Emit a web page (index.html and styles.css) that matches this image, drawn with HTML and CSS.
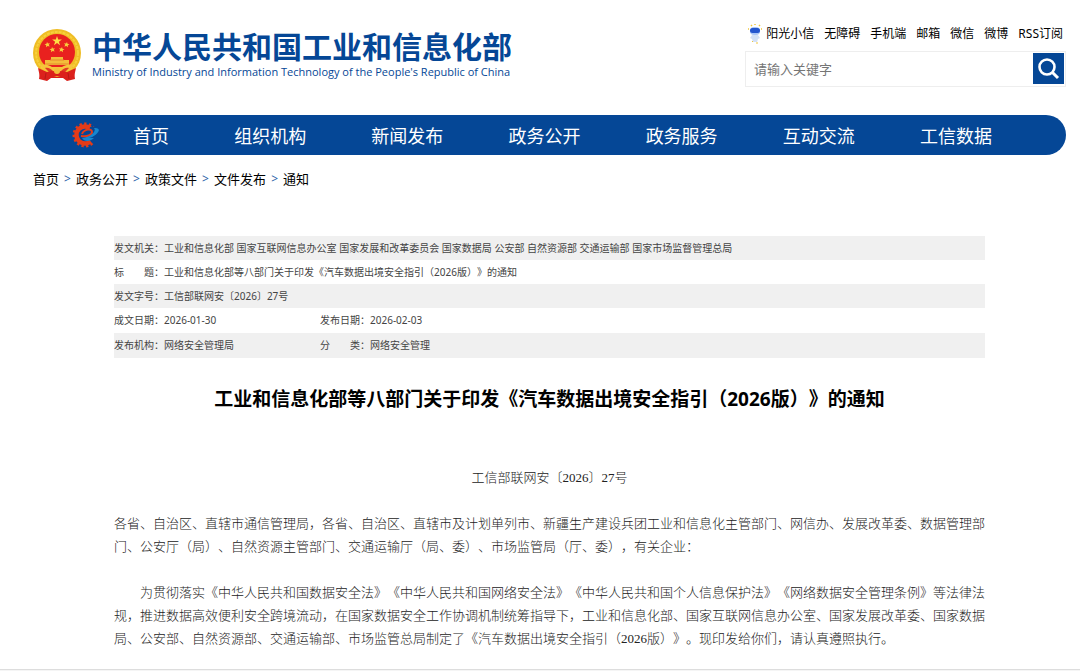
FILE: index.html
```html
<!DOCTYPE html>
<html lang="zh-CN">
<head>
    <meta charset="utf-8">
    <meta name="viewport" content="width=device-width, initial-scale=1">
    <title>工业和信息化部等八部门关于印发《汽车数据出境安全指引（2026版）》的通知</title>
    <link rel="stylesheet" href="styles.css">
</head>
<body>
    <header class="header">
        <a class="logo" href="#">
            <svg class="emblem" viewBox="0 0 48 52" aria-hidden="true">
                <path d="M8 36L6 50L14 52L18 49L30 49L34 52L42 50L40 36Z" fill="#d9201c"/>
                <circle cx="24" cy="24" r="24" fill="#efbd25"/>
                <circle cx="24" cy="24" r="21" fill="none" stroke="#f7d03c" stroke-width="2" stroke-dasharray="3 1"/>
                <circle cx="24" cy="23" r="18" fill="#e9211f"/>
                <path d="M24 7l1.200 3.500h3.700l-3 2.200 1.100 3.500-3-2.100-3 2.100 1.100-3.500-3-2.200h3.700z" fill="#ffdf45"/>
                <g fill="#f7ce3e">
                    <path d="M14 13l1 1.500 2-.2-1.200 1.500.8 1.800-2-.7-1.500 1.300.1-2-1.700-1 2-.5z"/>
                    <path d="M34 13l-1 1.500-2-.2 1.200 1.500-.8 1.800 2-.7 1.500 1.300-.1-2 1.700-1-2-.5z"/>
                    <path d="M19 18l1 1.500 2-.2-1.200 1.500.8 1.800-2-.7-1.500 1.300.1-2-1.700-1 2-.5z"/>
                    <path d="M29 18l-1 1.500-2-.2 1.200 1.500-.8 1.800 2-.7 1.500 1.300-.1-2 1.700-1-2-.5z"/>
                </g>
                <path d="M18 28h12v3h6v5H12v-5h6z" fill="#f4bd3b"/>
                <path d="M17 31h14M12 35h24" stroke="#e58a2c"/>
                <path d="M7 36c5-1 9 0 12 2h10c3-2 7-3 12-2l-5 7-7 3H19l-7-3z" fill="#f6c53c"/>
                <path d="M12 39c3-1 6 1 8 3h8c2-2 5-4 8-3l-6 6H18z" fill="#e03a24"/>
                <path d="M5 39l9 4 5-1 5 3 5-3 5 1 9-4-2 9-5-1-5 2-7-2-7 2-5-2-5 1z" fill="#dc211c"/>
                <path d="M13 44l-1 6M35 44l1 6" fill="none" stroke="#b51a16"/>
                <circle cx="24" cy="42" r="3" fill="#f4bd3b"/>
            </svg>
            <span class="logo-text">
                <span class="logo-name">中华人民共和国工业和信息化部</span>
                <span class="logo-en">Ministry of Industry and Information Technology of the People's Republic of China</span>
            </span>
        </a>
        <div class="tools">
            <div class="tool-links">
                <a class="robot-link" href="#">
                    <svg class="robot" viewBox="0 0 14 20" aria-hidden="true">
                        <path d="M3 2l1-1M7 1V0M11 2l1-1M1 5H0M13 5h1" stroke="#f0c63b" stroke-width="1.500"/>
                        <rect x="2" y="3" width="10" height="8" rx="4" fill="#a9c6f6"/>
                        <rect x="2" y="4" width="10" height="5" rx="2.500" fill="#2456ce"/>
                        <path d="M4 11h6l2 3-2 1-1 3H5l-1-3-2-1z" fill="#d3e1f6"/>
                        <path d="M4 17l1 1M9 18v2" stroke="#f0c63b"/>
                    </svg>阳光小信</a>
                <a href="#">无障碍</a>
                <a href="#">手机端</a>
                <a href="#">邮箱</a>
                <a href="#">微信</a>
                <a href="#">微博</a>
                <a href="#">RSS订阅</a>
            </div>
            <form class="search">
                <input class="search-input" type="text" placeholder="请输入关键字" aria-label="请输入关键字">
                <button class="search-btn" type="button" aria-label="搜索">
                    <svg viewBox="0 0 31 31" aria-hidden="true">
                        <circle cx="14" cy="14" r="7.500" fill="none" stroke="#fff" stroke-width="2.600"/>
                        <path d="M19 19l6 6" stroke="#fff" stroke-width="3"/>
                    </svg>
                </button>
            </form>
        </div>
    </header>

    <nav class="nav">
        <svg class="nav-icon" viewBox="0 0 28 26" aria-hidden="true">
            <circle cx="13" cy="13" r="11" fill="none" stroke="#e43b18" stroke-width="3" stroke-dasharray="2.300 2.308"/>
            <path d="M19 7A8.500 8.500 0 1 0 19 19" fill="none" stroke="#e43b18" stroke-width="4.500"/>
            <path d="M18 5l8-1v18l-6-1-4-5z" fill="#054796"/>
            <path d="M9 14c6 1 11-1 11-4 0-4-8-3-10 2" fill="none" stroke="#e43b18" stroke-width="2"/>
            <path d="M10 16c7 2 16-3 17-8-1-2-3-2-5-2 3 3-3 9-12 10 2 4 8 4 12 0" fill="#1686cf"/>
        </svg>
        <ul class="nav-list">
            <li><a href="#">首页</a></li>
            <li><a href="#">组织机构</a></li>
            <li><a href="#">新闻发布</a></li>
            <li><a href="#">政务公开</a></li>
            <li><a href="#">政务服务</a></li>
            <li><a href="#">互动交流</a></li>
            <li><a href="#">工信数据</a></li>
        </ul>
    </nav>

    <div class="crumbs">
        <a href="#">首页</a><span>&gt;</span><a href="#">政务公开</a><span>&gt;</span><a href="#">政策文件</a><span>&gt;</span><a href="#">文件发布</a><span>&gt;</span><a href="#">通知</a>
    </div>

    <main class="article">
        <table class="meta">
            <tr>
                <th>发文机关：</th>
                <td colspan="3">工业和信息化部 国家互联网信息办公室 国家发展和改革委员会 国家数据局 公安部 自然资源部 交通运输部 国家市场监督管理总局</td>
            </tr>
            <tr>
                <th>标&emsp;&emsp;题：</th>
                <td colspan="3">工业和信息化部等八部门关于印发《汽车数据出境安全指引（2026版）》的通知</td>
            </tr>
            <tr>
                <th>发文字号：</th>
                <td colspan="3">工信部联网安〔2026〕27号</td>
            </tr>
            <tr class="meta-split">
                <th>成文日期：</th>
                <td class="meta-left">2026-01-30</td>
                <th>发布日期：</th>
                <td>2026-02-03</td>
            </tr>
            <tr class="meta-split">
                <th>发布机构：</th>
                <td class="meta-left">网络安全管理局</td>
                <th>分&emsp;&emsp;类：</th>
                <td>网络安全管理</td>
            </tr>
        </table>

        <h1>工业和信息化部等八部门关于印发《汽车数据出境安全指引（2026版）》的通知</h1>

        <div class="content">
            <p class="doc-no">工信部联网安〔2026〕27号</p>
            <p>各省、自治区、直辖市通信管理局，各省、自治区、直辖市及计划单列市、新疆生产建设兵团工业和信息化主管部门、网信办、发展改革委、数据管理部门、公安厅（局）、自然资源主管部门、交通运输厅（局、委）、市场监管局（厅、委），有关企业：</p>
            <p class="indent">为贯彻落实《中华人民共和国数据安全法》《中华人民共和国网络安全法》《中华人民共和国个人信息保护法》《网络数据安全管理条例》等法律法规，推进数据高效便利安全跨境流动，在国家数据安全工作协调机制统筹指导下，工业和信息化部、国家互联网信息办公室、国家发展改革委、国家数据局、公安部、自然资源部、交通运输部、市场监管总局制定了《汽车数据出境安全指引（2026版）》。现印发给你们，请认真遵照执行。</p>
        </div>
    </main>
    <footer class="footer"></footer>
</body>
</html>
```
FILE: styles.css
```css
* {
    box-sizing: border-box;
}
body {
    margin: 0;
    background: #fff;
    color: #000;
    font-family: "Noto Sans", "Noto Sans CJK SC", sans-serif;
    font-size: 13px;
    text-spacing-trim: space-all;
}
a {
    color: inherit;
    text-decoration: none;
}

/* header */
.header {
    display: flex;
    justify-content: space-between;
    padding: 24px 14px 0 33px;
}
.logo {
    display: flex;
    align-items: flex-start;
    gap: 11px;
    padding-top: 5px;
}
.emblem {
    width: 48px;
    height: 52px;
}
.logo-text {
    display: flex;
    flex-direction: column;
    color: #054796;
    white-space: nowrap;
}
.logo-name {
    font-size: 30px;
    font-weight: bold;
    line-height: 36px;
}
.logo-en {
    font-family: "Open Sans", sans-serif;
    font-size: 11px;
    line-height: 14px;
}
.tools {
    width: 321px;
}
.tool-links {
    display: flex;
    justify-content: flex-end;
    gap: 10px;
    padding-right: 3px;
    font-size: 12px;
    line-height: 20px;
    white-space: nowrap;
}
.robot-link {
    display: flex;
    gap: 4px;
}
.robot {
    width: 14px;
    height: 20px;
}
.search {
    display: flex;
    margin-top: 7px;
    padding: 1px;
    border: 1px solid #eee;
}
.search-input {
    flex: 1;
    min-width: 0;
    height: 32px;
    padding: 0 7px;
    border: 0;
    font: inherit;
}
.search-input::placeholder {
    color: #757575;
}
.search-btn {
    width: 31px;
    height: 31px;
    padding: 0;
    border: 0;
    background: #054796;
}
.search-btn svg {
    display: block;
}

/* nav */
.nav {
    display: flex;
    align-items: center;
    margin: 28px 14px 0 33px;
    padding-left: 39px;
    height: 40px;
    border-radius: 20px;
    background: #054796;
    color: #fff;
}
.nav-icon {
    width: 28px;
    height: 26px;
}
.nav-list {
    flex: 1;
    display: flex;
    justify-content: space-between;
    margin: 0;
    padding: 0 74px 0 33px;
    list-style: none;
    font-size: 18px;
}
.crumbs {
    display: flex;
    padding: 14px 33px 0;
    line-height: 20px;
}
.crumbs span {
    width: 17px;
    color: #2a62a8;
    font-size: 12px;
    text-align: center;
}

/* article */
.article {
    margin: 0 95px 0 114px;
}
.meta {
    width: 100%;
    margin-top: 47px;
    border-collapse: collapse;
    color: #444;
    font-size: 10px;
    line-height: 24px;
}
.meta tr:nth-child(odd) {
    background: #f0f0f0;
}
.meta .meta-split {
    line-height: 25px;
}
.meta th {
    width: 50px;
    padding: 0;
    font-weight: normal;
    text-align: left;
    white-space: nowrap;
}
.meta td {
    padding: 0;
}
.meta .meta-left {
    width: 156px;
}
h1 {
    margin: 26px 0 0;
    font-size: 19px;
    line-height: 30px;
    text-align: center;
}
.content {
    margin-top: 52px;
    color: #222;
    font-family: "Liberation Serif", "Noto Sans CJK SC", serif;
    font-weight: 300;
    line-height: 23px;
}
.content p {
    margin: 0 0 23px;
}
.content p:last-child {
    margin-bottom: 19px;
}
.content .doc-no {
    text-align: center;
}
.content .indent {
    text-indent: 2em;
}
.footer {
    height: 2px;
    border-top: 1px solid #ddd;
    background: #f5f5f5;
}
```
